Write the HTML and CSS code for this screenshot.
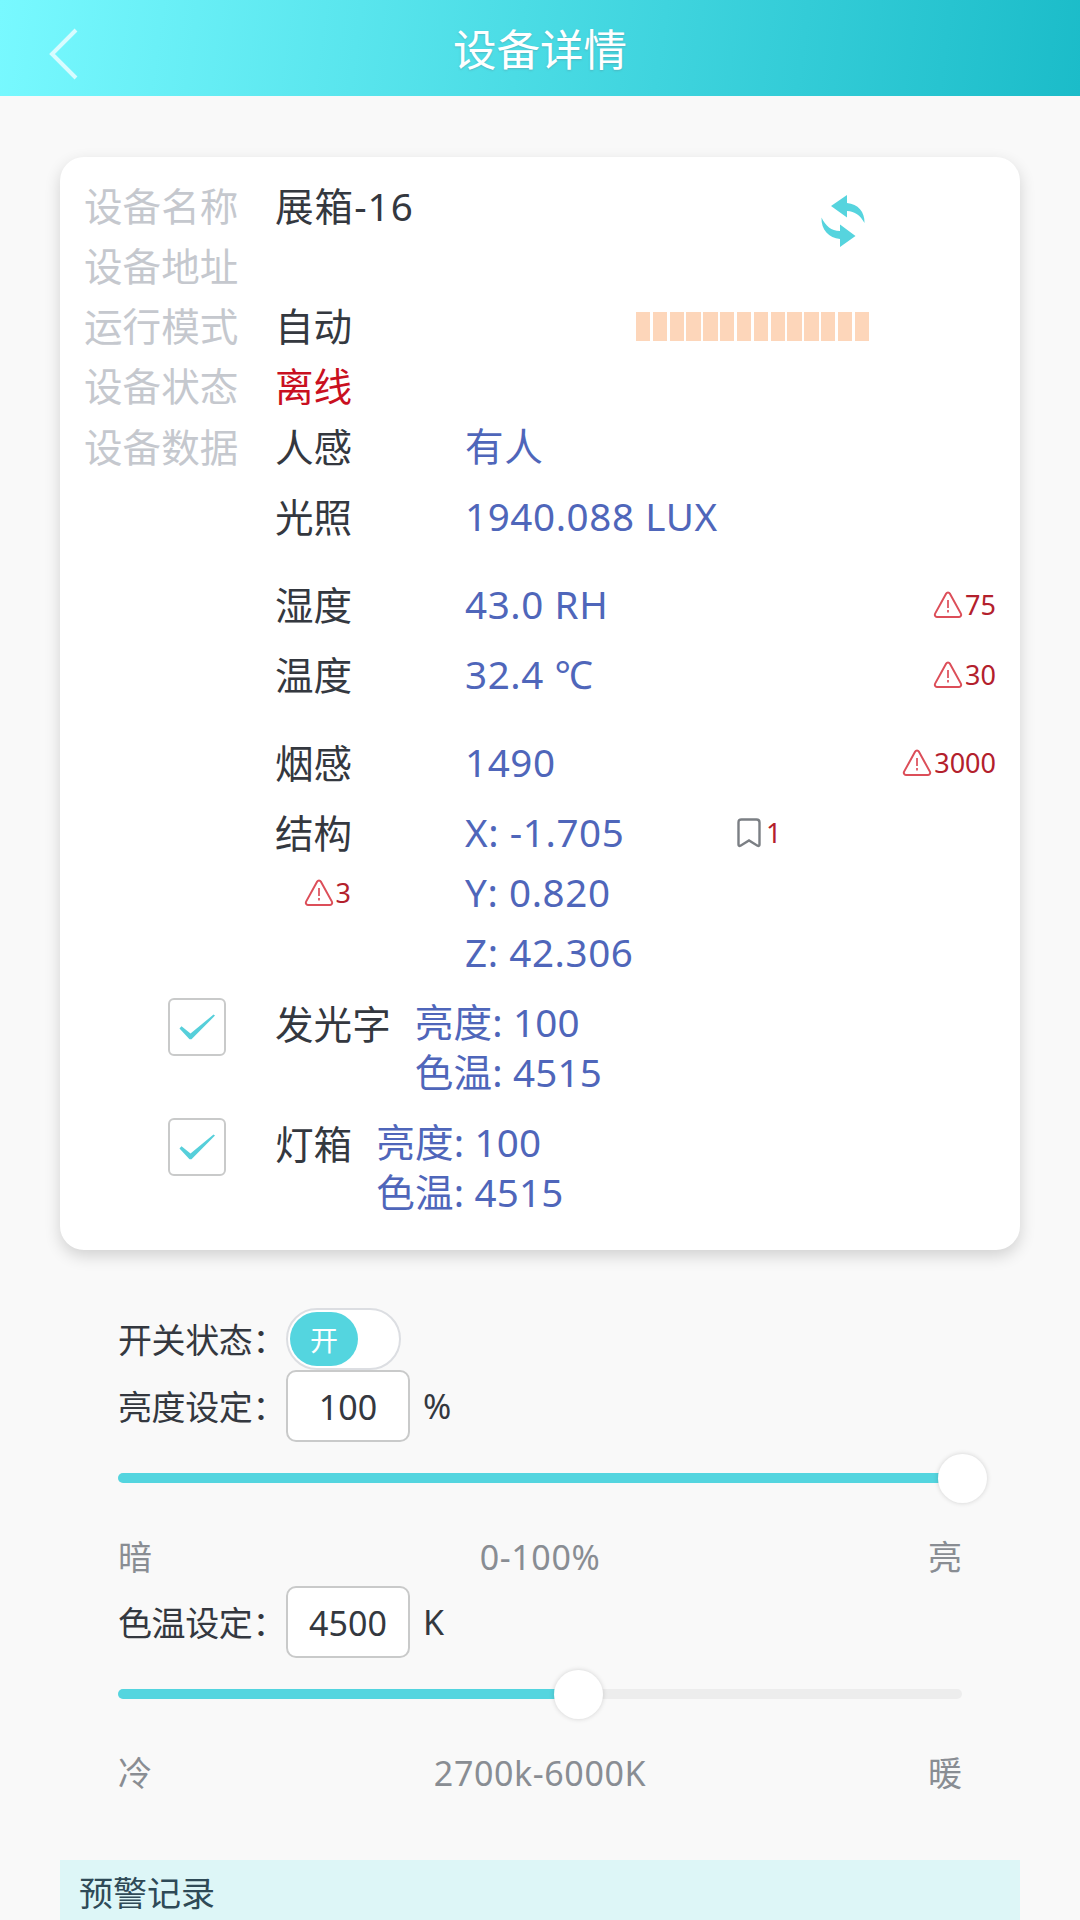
FILE: index.html
```
<!DOCTYPE html>
<html lang="zh-CN">
<head>
<meta charset="utf-8">
<title>设备详情</title>
<link rel="stylesheet" href="styles.css">
</head>
<body>
<svg class="defs" aria-hidden="true">
  <symbol id="warn" viewBox="0 0 30 28">
    <path d="M13.2 2.6 2.1 22.6c-.8 1.6.1 3.300 1.800 3.300h22.200c1.700 0 2.600-1.700 1.800-3.300L16.800 2.600c-.8-1.400-2.800-1.400-3.600 0Z" fill="none" stroke="currentColor" stroke-width="2"/>
    <path d="M15 9v8M15 19v2.500" fill="none" stroke="currentColor" stroke-width="1.700"/>
  </symbol>
  <symbol id="tick" viewBox="0 0 58 58">
    <path d="M13.500 28.200 22.500 35.500 45.500 16.600 47 17.600 23.500 41.300h-2L11.500 30.500Z" fill="#56cfda"/>
  </symbol>
</svg>
<header class="topbar">
  <svg class="back" viewBox="0 0 30 52"><path d="M28 2 4 26 28 50" fill="none" stroke="#d8fcff" stroke-width="4"/></svg>
  <h1 class="title">设备详情</h1>
</header>
<main class="page">
  <section class="card">
    <div class="row">
      <span class="label">设备名称</span><span class="device">展箱-16</span>
      <span class="refresh"><svg viewBox="0 0 44 52"><path d="M10 11 26 0v8C37 9 44 17 43.500 28 39 20 34 16.500 26 16v6.500ZM34.500 41 19 52v-8C8 43 0 35 .5 22.500 5 31.500 10 35.500 19 36v-6.500Z" fill="#56d4de"/></svg></span>
    </div>
    <div class="row"><span class="label">设备地址</span></div>
    <div class="row">
      <span class="label">运行模式</span><span>自动</span>
      <span class="meter"><i></i><i></i><i></i><i></i><i></i><i></i><i></i><i></i><i></i><i></i><i></i><i></i><i></i><i></i></span>
    </div>
    <div class="row"><span class="label">设备状态</span><span class="offline">离线</span></div>
    <div class="data">
      <span class="label">设备数据</span>
      <div class="readings">
        <div class="reading"><span>人感</span><span class="value">有人</span></div>
        <div class="reading group-end"><span>光照</span><span class="value">1940.088 LUX</span></div>
        <div class="reading"><span>湿度</span><span class="value">43.0 RH</span><span class="alarm"><svg><use href="#warn"/></svg>75</span></div>
        <div class="reading group-end"><span>温度</span><span class="value">32.4 ℃</span><span class="alarm"><svg><use href="#warn"/></svg>30</span></div>
        <div class="reading"><span>烟感</span><span class="value">1490</span><span class="alarm"><svg><use href="#warn"/></svg>3000</span></div>
        <div class="reading axes">
          <div class="axis-name"><span>结构</span><span class="alarm"><svg><use href="#warn"/></svg>3</span></div>
          <div class="value axis-values"><span>X: -1.705</span><span>Y: 0.820</span><span>Z: 42.306</span></div>
          <span class="mark"><svg viewBox="0 0 24 30"><path d="M1.500 26.500V4.500q0-3 3-3h15q3 0 3 3v22q0 2-2 1.200L12 22.500l-8.500 5.200q-2 .8-2-1.200Z" fill="none" stroke="#7b7f84" stroke-width="2.400"/></svg>1</span>
        </div>
      </div>
    </div>
    <div class="lamp">
      <span class="check"><svg><use href="#tick"/></svg></span>
      <span>发光字</span>
      <div class="value lamp-values"><span>亮度: 100</span><span>色温: 4515</span></div>
    </div>
    <div class="lamp">
      <span class="check"><svg><use href="#tick"/></svg></span>
      <span>灯箱</span>
      <div class="value lamp-values"><span>亮度: 100</span><span>色温: 4515</span></div>
    </div>
  </section>
  <section class="controls">
    <div class="control switch-row"><span class="name">开关状态：</span><span class="switch"><span class="knob">开</span></span></div>
    <div class="control"><span class="name">亮度设定：</span><span class="field">100</span><span>%</span></div>
    <div class="slider"><div class="fill" style="width:100%"></div><div class="thumb"></div></div>
    <div class="scale"><span>暗</span><span class="range">0-100%</span><span>亮</span></div>
    <div class="control"><span class="name">色温设定：</span><span class="field">4500</span><span>K</span></div>
    <div class="slider"><div class="fill" style="width:54.540%"></div><div class="thumb"></div></div>
    <div class="scale"><span>冷</span><span class="range">2700k-6000K</span><span>暖</span></div>
  </section>
  <section class="records">预警记录</section>
</main>
</body>
</html>
```
FILE: styles.css
```
* { box-sizing: border-box; }
body {
  margin: 0;
  height: 1920px;
  overflow: hidden;
  background: #f9f9f9;
  color: #34383f;
  font-family: "Noto Sans", "Noto Sans CJK SC", sans-serif;
  font-size: 38.600px;
  white-space: nowrap;
}
.defs { display: none; }
svg { display: block; }

.topbar {
  display: grid;
  grid-template-columns: 100px 1fr 100px;
  height: 96px;
  background: linear-gradient(98deg, #78f9ff 0%, #4bdce5 48%, #1bbcc9 100%);
}
.back { width: 30px; height: 52px; margin: 28px 0 0 48px; }
.title {
  margin: 0;
  font-size: 43.500px;
  font-weight: 400;
  line-height: 99px;
  text-align: center;
  color: #fff;
  text-shadow: 0 1px 2px rgba(90, 130, 140, .4);
}

.page { padding: 61px 60px 0; }
.card {
  height: 1093px;
  padding: 20px 24px 0;
  background: #fff;
  border-radius: 24px;
  box-shadow: 0 6px 16px rgba(0, 0, 0, .16);
}
.row {
  display: grid;
  grid-template-columns: 191px 361px 233px;
  height: 60px;
  line-height: 59px;
}
.label { color: #c5c8ce; }
.device { letter-spacing: 1px; }
.offline { color: #c9101f; }
.refresh { display: flex; justify-content: flex-end; padding: 18px 4px 0 0; }
.refresh svg { width: 44px; height: 52px; }
.meter { display: flex; align-items: center; gap: 2.500px; padding-bottom: 1px; }
.meter i { flex: 1; height: 29px; background: #fdd6ba; }

.data { display: grid; grid-template-columns: 191px 1fr; line-height: 60px; }
.reading {
  display: grid;
  grid-template-columns: 190px 272px 1fr;
  height: 60px;
  margin-bottom: 10px;
}
.reading > .value { letter-spacing: .6px; line-height: 58px; }
.group-end { margin-bottom: 28px; }
.value { color: #4f66ba; }
.alarm {
  display: flex;
  align-items: center;
  justify-content: flex-end;
  gap: 2px;
  font-size: 27px;
  color: #b3202c;
}
.alarm svg { width: 30px; height: 28px; color: #dc4e59; }
.axes { height: 180px; }
.axis-name { width: 76px; }
.axis-values, .lamp-values { display: flex; flex-direction: column; }
.axis-values span { height: 60px; }
.mark {
  display: flex;
  align-items: center;
  gap: 5px;
  height: 60px;
  font-size: 27px;
  color: #b3202c;
}
.mark svg { width: 24px; height: 30px; }

.lamp {
  display: grid;
  grid-template-columns: 191px auto 1fr;
  height: 120px;
  padding-top: 5px;
  line-height: 50px;
}
.lamp > span:nth-child(2) { padding-top: 1px; }
.lamp-values { padding-left: 24px; letter-spacing: .2px; }
.lamp-values span { position: relative; top: -1px; }
.check {
  width: 58px;
  height: 58px;
  margin: 0 0 0 84px;
  border: 2px solid #c9caca;
  border-radius: 6px;
}
.check svg { width: 58px; height: 58px; margin: -2px; }

.controls { padding: 58px 58px 0; font-size: 34px; }
.control { display: flex; align-items: center; height: 72px; gap: 13px; }
.name { width: 155px; letter-spacing: -.4px; padding-bottom: 1px; }
.switch-row { height: 62px; }
.switch {
  width: 115px;
  height: 62px;
  padding: 2px;
  border: 2px solid #dcdee2;
  border-radius: 31px;
  background: #fff;
}
.knob {
  display: block;
  width: 68px;
  height: 54px;
  border-radius: 30px;
  background: #54d5df;
  color: #fff;
  font-size: 28px;
  line-height: 57px;
  text-align: center;
}
.field {
  width: 124px;
  height: 72px;
  border: 2px solid #c9caca;
  border-radius: 10px;
  background: #fff;
  line-height: 70px;
  text-align: center;
}
.slider {
  display: flex;
  align-items: center;
  height: 10px;
  margin: 31px 0 45px;
  border-radius: 5px;
  background: #ededed;
}
.fill { height: 10px; border-radius: 5px; background: #54d5df; }
.thumb {
  flex: none;
  width: 49px;
  height: 49px;
  margin: 0 -24.500px;
  border-radius: 50%;
  background: #fff;
  box-shadow: 0 0 5px rgba(0, 0, 0, .16);
}
.scale {
  display: grid;
  grid-template-columns: 1fr auto 1fr;
  height: 58px;
  line-height: 58px;
  color: #898d93;
}
.scale span:last-child { text-align: right; }
.range { letter-spacing: .6px; }

.records {
  height: 100px;
  margin-top: 58px;
  padding-left: 19px;
  background: #ddf6f7;
  font-size: 34px;
  line-height: 66px;
  color: #2f4a57;
}
```
